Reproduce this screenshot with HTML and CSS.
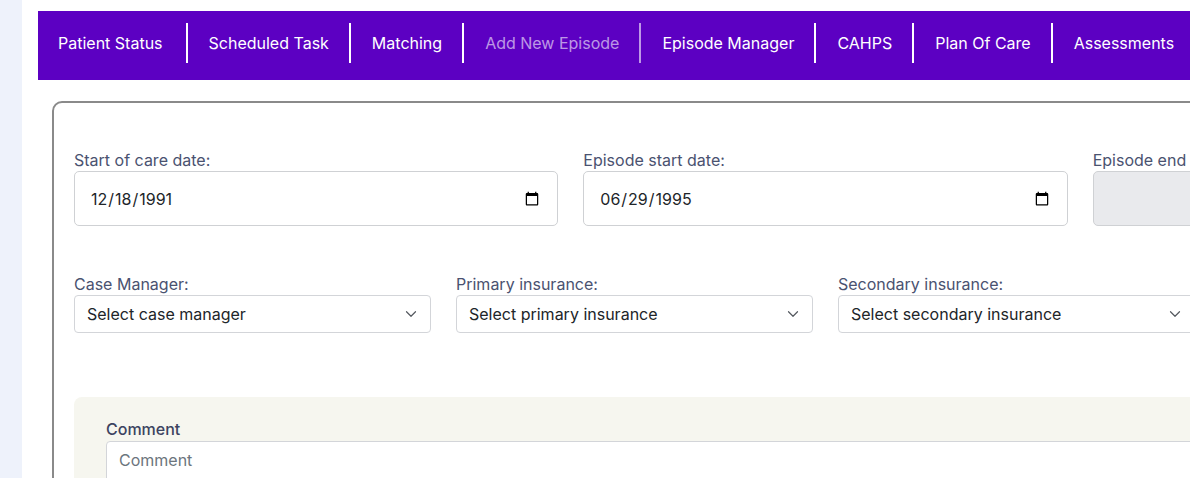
FILE: index.html
```html
<!DOCTYPE html>
<html lang="en">
<head>
<meta charset="utf-8">
<title>Add New Episode</title>
<link rel="stylesheet" href="styles.css">
</head>
<body>
<div class="layout">
  <aside class="sidebar"></aside>
  <main class="main">
    <nav class="tabs">
      <a class="tab">Patient Status</a>
      <a class="tab">Scheduled Task</a>
      <a class="tab">Matching</a>
      <a class="tab tab-active">Add New Episode</a>
      <a class="tab">Episode Manager</a>
      <a class="tab">CAHPS</a>
      <a class="tab">Plan Of Care</a>
      <a class="tab">Assessments</a>
    </nav>
    <section class="card">
      <div class="row row-3">
        <div class="field">
          <label class="label" for="soc">Start of care date:</label>
          <input class="date-input" id="soc" type="date" value="1991-12-18">
        </div>
        <div class="field">
          <label class="label" for="esd">Episode start date:</label>
          <input class="date-input" id="esd" type="date" value="1995-06-29">
        </div>
        <div class="field">
          <label class="label" for="eed">Episode end date:</label>
          <input class="date-input date-disabled" id="eed" type="text" disabled>
        </div>
      </div>
      <div class="row row-4">
        <div class="field">
          <label class="label" for="cm">Case Manager:</label>
          <select class="select" id="cm"><option>Select case manager</option></select>
        </div>
        <div class="field">
          <label class="label" for="pi">Primary insurance:</label>
          <select class="select" id="pi"><option>Select primary insurance</option></select>
        </div>
        <div class="field">
          <label class="label" for="si">Secondary insurance:</label>
          <select class="select" id="si"><option>Select secondary insurance</option></select>
        </div>
        <div class="field"></div>
      </div>
      <div class="comment-box">
        <label class="comment-label" for="cmt">Comment</label>
        <textarea class="comment-input" id="cmt" placeholder="Comment"></textarea>
      </div>
    </section>
  </main>
</div>
</body>
</html>
```
FILE: styles.css
```css
html, body {
  margin: 0;
  padding: 0;
  height: 478px;
  overflow: hidden;
  background: #ffffff;
  font-family: Inter, "Noto Sans", "Liberation Sans", sans-serif;
  font-size: 16px;
}

.layout {
  display: flex;
  min-height: 478px;
}

.sidebar {
  flex: none;
  width: 22px;
  background: #eef2fb;
}

.main {
  flex: 1;
  min-width: 0;
  padding: 11px 0 0 16px;
}

.tabs {
  display: flex;
  background: #5c00c2;
  padding: 12px 0 17px;
}

.tab {
  flex: none;
  white-space: nowrap;
  color: #ffffff;
  font-size: 16px;
  line-height: 40px;
  height: 40px;
  padding: 0 20px 0 21px;
  border-right: 2px solid #ffffff;
  text-decoration: none;
}

.tab:first-child {
  padding: 0 23px 0 20px;
}

.tab:last-child {
  border-right: none;
}

.tab-active {
  color: rgba(255, 255, 255, 0.6);
  border-right-color: rgba(255, 255, 255, 0.6);
}

.card {
  margin: 21px 0 0 14px;
  width: 1503px;
  border: 2px solid #8a8a8a;
  border-radius: 10px;
  padding: 46px 20px 0;
  min-height: 400px;
}

.row {
  display: grid;
  column-gap: 25px;
}

.row-3 {
  grid-template-columns: repeat(3, 1fr);
}

.row-4 {
  grid-template-columns: repeat(4, 1fr);
  margin-top: 47px;
}

.field {
  display: flex;
  flex-direction: column;
  min-width: 0;
}

.label {
  display: block;
  font-size: 16px;
  line-height: 22px;
  color: #4a5270;
  white-space: nowrap;
}

.date-input {
  box-sizing: border-box;
  width: 100%;
  height: 55px;
  margin: 0;
  padding: 0 15px;
  font-family: Inter, "Noto Sans", "Liberation Sans", sans-serif;
  font-size: 16px;
  color: #212529;
  background: #ffffff;
  border: 1px solid #cfd1d4;
  border-radius: 5px;
}

.date-disabled {
  background: #e9eaed;
}

.select {
  box-sizing: border-box;
  width: 100%;
  height: 38px;
  margin: 0;
  padding: 6px 36px 6px 12px;
  font-family: Inter, "Noto Sans", "Liberation Sans", sans-serif;
  font-size: 16px;
  line-height: 24px;
  color: #212529;
  background-color: #ffffff;
  background-image: url("data:image/svg+xml,%3csvg xmlns='http://www.w3.org/2000/svg' viewBox='0 0 16 16'%3e%3cpath fill='none' stroke='%23555a60' stroke-linecap='round' stroke-linejoin='round' stroke-width='1.6' d='m2 5 6 6 6-6'/%3e%3c/svg%3e");
  background-repeat: no-repeat;
  background-position: right 12px center;
  background-size: 14px 12px;
  border: 1px solid #d3d5d9;
  border-radius: 4px;
  appearance: none;
  -webkit-appearance: none;
}

.comment-box {
  margin-top: 64px;
  background: #f6f6ef;
  border-radius: 8px;
  padding: 21px 32px 40px;
}

.comment-label {
  display: block;
  font-size: 16px;
  line-height: 22px;
  font-weight: 500;
  color: #3c4360;
}

.comment-input {
  display: block;
  box-sizing: border-box;
  width: 100%;
  height: 100px;
  margin: 1px 0 0;
  padding: 6px 12px;
  font-family: Inter, "Noto Sans", "Liberation Sans", sans-serif;
  font-size: 16px;
  line-height: 24px;
  color: #212529;
  background: #ffffff;
  border: 1px solid #d3d5d9;
  border-radius: 4px;
  resize: none;
}

.comment-input::placeholder {
  color: #6c757d;
}
```
